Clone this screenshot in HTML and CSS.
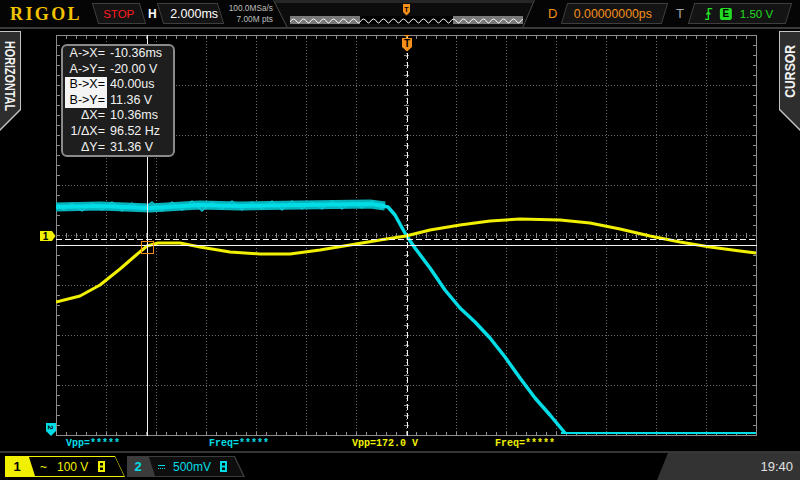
FILE: index.html
```html
<!DOCTYPE html>
<html>
<head>
<meta charset="utf-8">
<link rel="stylesheet" href="styles.css">
</head>
<body>
<div class="scope">
  <header class="topbar">
    <div class="logo">RIGOL</div>
    <div class="pbox stop"><span>STOP</span></div>
    <div class="hlabel">H</div>
    <div class="pbox tbase"><span>2.000ms</span></div>
    <div class="sinfo"><div>100.0MSa/s</div><div>7.00M pts</div></div>
    <svg class="memory" width="262" height="27" viewBox="0 0 262 27">
      <defs>
        <pattern id="wave" x="17" y="16" width="10" height="8" patternUnits="userSpaceOnUse">
          <path d="M0 6 Q3.5 0 7 6 Q8.5 8 10 6" fill="none" stroke="#f2f2f2" stroke-width="1"/>
        </pattern>
      </defs>
      <polygon points="0,0 262,0 250,27 14,27" fill="#0c0c0c"/>
      <rect x="2" y="0" width="258" height="3" fill="#262626"/>
      <path d="M0.5 0L14 27M261.5 0L250 27" stroke="#4a4a4a" stroke-width="1"/>
      <rect x="17" y="16" width="233" height="8" fill="#7a7a7a"/>
      <rect x="87" y="16" width="93" height="8" fill="#000"/>
      <rect x="17" y="16" width="233" height="8" fill="url(#wave)"/>
      <polygon points="130,4 137,4 137,12 133.5,15.5 130,12" fill="#f5901a"/>
      <text x="133.5" y="11.5" text-anchor="middle" class="tmark">T</text>
    </svg>
    <div class="dlabel">D</div>
    <div class="pbox delay"><span>0.00000000ps</span></div>
    <div class="tlabel">T</div>
    <div class="pbox trig">
      <span class="trigin">
        <svg class="edge" width="8" height="12" viewBox="0 0 8 12"><path d="M0 11.5H3.5V0.5H7.5M1.5 6.5L3.5 4L5.5 6.5" fill="none" stroke="#22dd22" stroke-width="1.4"/></svg>
        <span class="ebox">E</span>
        <span class="tlevel">1.50 V</span>
      </span>
    </div>
  </header>

  <main class="main">
    <aside class="lside">
      <div class="tab htab"><div class="tabin"><span class="vtext">HORIZONTAL</span></div></div>
    </aside>

    <section class="screen">
      <svg class="grid" width="701" height="401" viewBox="0 0 701 401">
        <defs>
          <pattern id="vt" width="10" height="401" patternUnits="userSpaceOnUse">
            <path d="M0.5 0V4M0.5 397V401M0.5 198V203" stroke="#8c8c8c" stroke-width="1"/>
          </pattern>
          <pattern id="ht" width="701" height="10" patternUnits="userSpaceOnUse">
            <path d="M0 0.5H4M697 0.5H701M348 0.5H353" stroke="#8c8c8c" stroke-width="1"/>
          </pattern>
        </defs>
        <path class="dots" d="M50.5 0V401M100.5 0V401M150.5 0V401M200.5 0V401M250.5 0V401M300.5 0V401M350.5 0V401M400.5 0V401M450.5 0V401M500.5 0V401M550.5 0V401M600.5 0V401M650.5 0V401M0 50.5H701M0 100.5H701M0 150.5H701M0 200.5H701M0 250.5H701M0 300.5H701M0 350.5H701"/>
        <rect width="701" height="401" fill="url(#vt)"/>
        <rect width="701" height="401" fill="url(#ht)"/>
        <rect x="0.5" y="0.5" width="700" height="400" fill="none" stroke="#8c8c8c" stroke-width="1"/>

        <polyline class="cyanout" stroke-width="9" points="0,172 44,171 94,173 144,170 184,171 244,170 314,169 329,171"/>
        <polyline class="cyan2" stroke-width="1.5" points="0,168 8,175 16,168 26,176 36,168 46,175 56,167 66,176 76,168 86,175 96,167 106,176 116,167 126,175 136,166 146,176 156,167 166,174 176,166 186,175 196,167 206,174 216,166 226,175 236,166 246,174 256,167 266,174 276,166 286,174 296,167 306,173 316,166 326,174"/>
        <polyline class="cyan" stroke-width="4" points="0,172 44,171 94,173 144,170 184,171 244,170 314,169 329,171"/>
        <polyline class="cyan" stroke-width="3.5" points="326,171 332,172 339,180 350,200 359,213 374,233 389,255 404,273 419,287 434,303 449,322 464,343 479,363 494,380 509,398"/>
        <polyline class="cyan" stroke-width="2" points="505,398 700,398"/>

        <polyline class="yellow" points="0,267 24,261 44,250 64,234 79,221 91,211 102,208 124,208 144,212 174,217 204,219 234,219 264,215 294,210 324,205 350,201 374,195 404,190 434,186 464,184 504,185 534,188 564,194 594,201 624,207 654,212 684,216 700,218"/>

        <path d="M91.5 0V401M0 210.5H701" stroke="#f4f4f4" stroke-width="1"/>
        <path d="M351.5 0V401M0 204.5H701" stroke="#f4f4f4" stroke-width="1" stroke-dasharray="6 3"/>
        <rect x="85.5" y="206.5" width="12" height="12" fill="none" stroke="#f08a10" stroke-width="1"/>
      </svg>

      <svg class="trigmark" width="10" height="17" viewBox="0 0 10 17">
        <polygon points="2,0 8,0 5,2.5" fill="#f5901a"/>
        <polygon points="0,3 10,3 10,12 5,16.5 0,12" fill="#f5901a"/>
        <text x="5" y="11.5" text-anchor="middle" class="mk">T</text>
      </svg>
      <svg class="ch1mark" width="16" height="10" viewBox="0 0 16 10">
        <polygon points="0,0 12,0 15.5,5 12,10 0,10" fill="#f0f000"/>
        <text x="5.5" y="9" text-anchor="middle" class="mk">1</text>
      </svg>
      <svg class="ch2mark" width="10" height="13" viewBox="0 0 10 13">
        <polygon points="0,0 10,0 10,8 5,13 0,8" fill="#00dde6"/>
        <text x="0" y="0" text-anchor="middle" class="mk small" transform="translate(2.2 4.5) rotate(90)">2</text>
      </svg>

      <div class="cbox">
        <div class="crow"><span class="lab">A-&gt;X=</span><span class="val">-10.36ms</span></div>
        <div class="crow"><span class="lab">A-&gt;Y=</span><span class="val">-20.00 V</span></div>
        <div class="crow"><span class="lab hl">B-&gt;X=</span><span class="val">40.00us</span></div>
        <div class="crow"><span class="lab hl">B-&gt;Y=</span><span class="val">11.36 V</span></div>
        <div class="crow"><span class="lab">ΔX=</span><span class="val">10.36ms</span></div>
        <div class="crow"><span class="lab">1/ΔX=</span><span class="val">96.52 Hz</span></div>
        <div class="crow"><span class="lab">ΔY=</span><span class="val">31.36 V</span></div>
      </div>
    </section>

    <aside class="rside">
      <div class="tab ctab"><div class="tabin"><span class="vtext">CURSOR</span></div></div>
    </aside>
  </main>

  <div class="meas">
    <span class="mc2">Vpp=*****</span>
    <span class="mc2">Freq=*****</span>
    <span class="mc1">Vpp=172.0 V</span>
    <span class="mc1">Freq=*****</span>
  </div>

  <footer class="status">
    <div class="chtab ch1">
      <div class="chnum">1</div>
      <div class="chbody">
        <span class="coup">~</span>
        <span class="scale">100 V</span>
        <svg class="bw" width="7" height="11" viewBox="0 0 7 11"><rect width="7" height="11" fill="#f0f000"/><rect x="2" y="2" width="3" height="2.5" fill="#000"/><rect x="2" y="6.5" width="3" height="2.5" fill="#000"/></svg>
      </div>
    </div>
    <div class="chtab ch2">
      <div class="chnum">2</div>
      <div class="chbody">
        <span class="dc"></span>
        <span class="scale">500mV</span>
        <svg class="bw" width="7" height="11" viewBox="0 0 7 11"><rect width="7" height="11" fill="#00dde6"/><rect x="2" y="2" width="3" height="2.5" fill="#000"/><rect x="2" y="6.5" width="3" height="2.5" fill="#000"/></svg>
      </div>
    </div>
    <div class="clock">19:40</div>
  </footer>
</div>
</body>
</html>
```

FILE: styles.css
```css
* { box-sizing: border-box; margin: 0; padding: 0; }
html, body { background: #000; }
body {
  width: 800px;
  height: 480px;
  overflow: hidden;
  font-family: "Liberation Sans", Arial, sans-serif;
  color: #fff;
}
.scope { width: 800px; height: 480px; display: flex; flex-direction: column; }

/* ---------- top bar ---------- */
.topbar {
  height: 29px;
  flex: none;
  border-bottom: 2px solid #3a3a3a;
  display: flex;
  align-items: center;
  background: #050505;
}
.logo {
  margin-left: 10px;
  width: 70px;
  font-family: "Liberation Serif", serif;
  font-weight: bold;
  font-size: 18px;
  letter-spacing: 2.4px;
  line-height: 1;
  color: #f3c300;
}
.pbox {
  height: 21px;
  display: flex;
  align-items: center;
  background: #141414;
  border: 1px solid #3e3e3e;
  transform: skewX(17deg);
}
.pbox > span { display: inline-flex; align-items: center; transform: skewX(-17deg); }
.stop { margin-left: 15px; width: 48px; justify-content: center; }
.stop span { color: #ff1c1c; font-size: 11.5px; }
.hlabel { margin-left: 5px; width: 9px; font-weight: bold; font-size: 12px; color: #fff; }
.tbase { margin-left: 3px; width: 61px; padding-left: 9px; }
.tbase span { font-size: 12.5px; color: #fff; }
.sinfo {
  margin-left: 6px;
  width: 46px;
  text-align: right;
  font-size: 8.3px;
  line-height: 10.5px;
  color: #bdbdbd;
}
.memory { display: block; flex: none; }
.tmark { font: bold 7px "Liberation Sans", sans-serif; fill: #000; }
.dlabel { margin-left: 13px; width: 10px; font-size: 13px; color: #f5901a; }
.delay { margin-left: 6px; width: 101px; transform: skewX(-17deg); justify-content: center; padding-right: 4px; }
.delay span { transform: skewX(17deg); font-size: 12.3px; color: #f5901a; }
.tlabel { margin-left: 11px; width: 9px; font-size: 13px; color: #a8a8a8; }
.trig { margin-left: 6px; width: 98px; transform: skewX(-17deg); padding-left: 13px; }
.trig .trigin { transform: skewX(17deg); }
.edge { display: block; }
.ebox {
  margin-left: 7px;
  width: 12px;
  height: 12px;
  border-radius: 2px;
  background: #22dd22;
  color: #000;
  font-weight: bold;
  font-size: 10px;
  line-height: 12px;
  text-align: center;
}
.tlevel { margin-left: 8px; font-size: 11.5px; color: #22dd22; }

/* ---------- main area ---------- */
.main { height: 407px; flex: none; display: flex; }
.lside { width: 56px; flex: none; padding-top: 2px; }
.rside { width: 43px; flex: none; padding-top: 2px; padding-left: 22px; }
.screen { width: 701px; flex: none; padding-top: 6px; position: relative; }
.grid { display: block; }
.dots { stroke: #6c6c6c; stroke-width: 1; stroke-dasharray: 1 2; fill: none; }
.cyan { fill: none; stroke: #00dde6; stroke-linejoin: round; }
.cyanout { fill: none; stroke: #05b3bd; stroke-linejoin: round; }
.cyan2 { fill: none; stroke: #0bc6d0; stroke-linejoin: round; }
.yellow { fill: none; stroke: #f0f000; stroke-width: 3; stroke-linejoin: round; }

.tab { width: 21px; height: 100px; background: #c4c4c4; }
.tabin {
  height: 100%;
  background: #2e2e2e;
  display: flex;
  justify-content: center;
  align-items: flex-start;
  padding-top: 9px;
}
.htab { clip-path: polygon(0 0, 100% 0, 100% 79px, 0 100%); padding: 1px 1px 0 0; }
.htab .tabin { clip-path: polygon(0 0, 20px 0, 20px 77px, 0 97px); }
.ctab { clip-path: polygon(0 0, 100% 0, 100% 100%, 0 79px); padding: 1px 0 0 1px; }
.ctab .tabin { clip-path: polygon(0 0, 20px 0, 20px 97px, 0 77px); }
.vtext {
  writing-mode: vertical-rl;
  font-weight: bold;
  color: #f2f2f2;
  white-space: nowrap;
  flex: none;
}
.htab .vtext { font-size: 15px; line-height: 18px; transform: scaleY(0.72); transform-origin: top center; }
.ctab .vtext { font-size: 14px; line-height: 18px; transform: rotate(180deg) scaleY(0.87); transform-origin: center; }

.mk { font: bold 10px "Liberation Sans", sans-serif; fill: #000; }
.mk.small { font-size: 8px; }
.trigmark { position: absolute; left: 346px; top: 6px; }
.ch1mark { position: absolute; left: -16px; top: 202px; }
.ch2mark { position: absolute; left: -10px; top: 394px; }

.cbox {
  position: absolute;
  left: 5px;
  top: 15px;
  width: 114px;
  border: 2px solid #8a8a8a;
  border-radius: 6px;
  background: #1e1e1e;
  padding-left: 2px;
  font-size: 12.5px;
  line-height: 15.6px;
  color: #f2f2f2;
}
.crow { display: grid; grid-template-columns: 42px auto; column-gap: 3px; }
.lab { text-align: right; padding-right: 2px; white-space: nowrap; }
.hl { background: #f4f4f4; color: #000; }
.val { white-space: nowrap; }

/* ---------- measurement bar ---------- */
.meas {
  height: 15px;
  flex: none;
  display: flex;
  padding-left: 66px;
  font-family: "Liberation Mono", monospace;
  font-weight: bold;
  font-size: 10px;
  line-height: 15px;
}
.meas span { width: 143px; flex: none; white-space: pre; }
.mc2 { color: #00dde6; }
.mc1 { color: #f0f000; }

/* ---------- status bar ---------- */
.status {
  height: 29px;
  flex: none;
  border-top: 2px solid #363636;
  display: flex;
}
.chtab { margin-top: 3px; height: 21px; display: flex; flex: none; }
.chnum {
  display: flex;
  align-items: center;
  justify-content: center;
  font-weight: bold;
  font-size: 13px;
}
.chbody {
  margin: 1px 0;
  width: 96px;
  display: flex;
  align-items: center;
  font-size: 12px;
}
.ch1 { margin-left: 5px; width: 120px; background: #f0f000; clip-path: polygon(0 0, 110px 0, 120px 100%, 0 100%); }
.ch1 .chnum { width: 24px; color: #000; }
.ch1 .chbody { background: #000; color: #f0f000; clip-path: polygon(0 0, 86px 0, 95px 100%, 6px 100%); }
.ch1 .coup { margin-left: 11px; }
.ch2 { margin-left: 2px; width: 118px; background: #3c3c3c; clip-path: polygon(0 0, 108px 0, 118px 100%, 0 100%); }
.ch2 .chnum { width: 22px; color: #00dde6; }
.ch2 .chbody { background: #0e0e0e; color: #00dde6; clip-path: polygon(0 0, 85px 0, 94px 100%, 6px 100%); }
.dc {
  margin-left: 9px;
  width: 7px;
  height: 4px;
  border-top: 1px solid #00dde6;
  border-bottom: 1px dotted #00dde6;
}
.scale { margin-left: 10px; }
.ch2 .scale { margin-left: 8px; }
.bw { display: block; margin-left: 10px; }
.ch2 .bw { margin-left: 9px; }
.clock {
  margin-left: auto;
  width: 143px;
  background: #333;
  clip-path: polygon(11px 0, 100% 0, 100% 100%, 0 100%);
  display: flex;
  align-items: center;
  justify-content: flex-end;
  padding-right: 7px;
  font-size: 13px;
  color: #e0e0e0;
}
```
